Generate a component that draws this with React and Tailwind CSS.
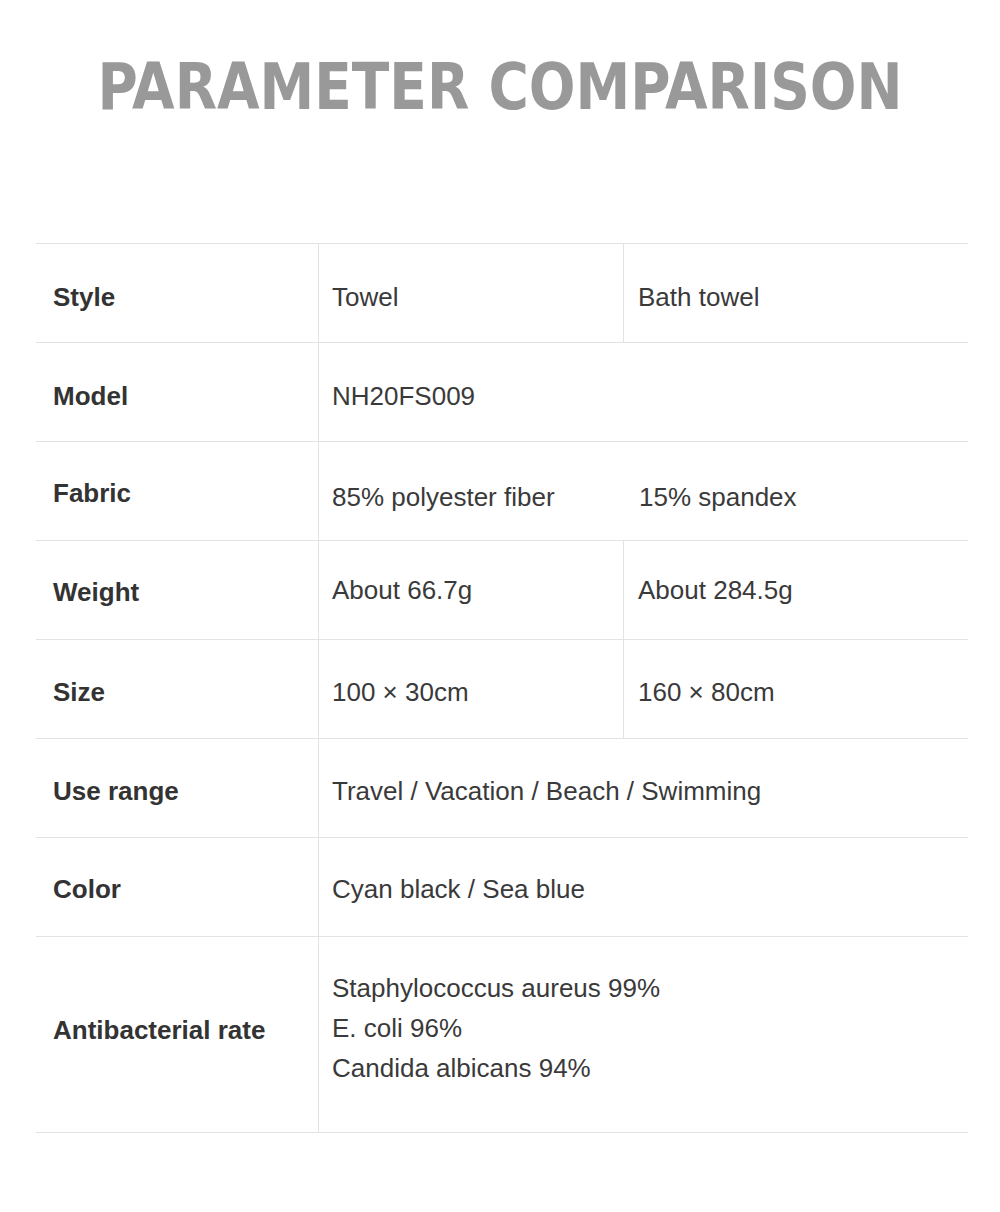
import React from 'react';

// 参数对比
const rows = [
  { label: 'Style', cells: ['Towel', 'Bath towel'], split: true, lp: 'pt-[8px]', vp: 'pt-[8px]' },
  { label: 'Model', cells: ['NH20FS009'], lp: 'pt-[8px]', vp: 'pt-[8px]' },
  { label: 'Fabric', cells: ['85% polyester fiber', '15% spandex'], split: false, lp: 'pt-[4px]', vp: 'pt-[12px]' },
  { label: 'Weight', cells: ['About 66.7g', 'About 284.5g'], split: true, lp: 'pt-[4px]', vp: '' },
  { label: 'Size', cells: ['100 × 30cm', '160 × 80cm'], split: true, lp: 'pt-[6px]', vp: 'pt-[6px]' },
  { label: 'Use range', cells: ['Travel / Vacation / Beach / Swimming'], lp: 'pt-[6px]', vp: 'pt-[6px]' },
  { label: 'Color', cells: ['Cyan black / Sea blue'], lp: 'pt-[4px]', vp: 'pt-[4px]' },
];

const Row = ({ row }) => {
  const two = row.cells.length === 2;
  return (
    <div className="grid grid-cols-[282px_306px_344px] h-[99px] border-b border-[#e3e3e3]">
      <div className={`flex items-center pl-[17px] font-bold text-[#333] ${row.lp}`}>{row.label}</div>
      {two ? (
        <>
          <div className={`flex items-center pl-[13px] border-l border-[#e3e3e3] ${row.split ? 'border-r' : ''} ${row.vp}`}>
            {row.cells[0]}
          </div>
          <div className={`flex items-center ${row.split ? 'pl-[14px]' : 'pl-[15px]'} ${row.vp}`}>
            {row.cells[1]}
          </div>
        </>
      ) : (
        <div className={`col-span-2 flex items-center pl-[13px] border-l border-[#e3e3e3] ${row.vp}`}>{row.cells[0]}</div>
      )}
    </div>
  );
};

export default function App() {
  return (
    <div className="w-[1000px] h-[1212px] bg-white text-[#3a3a3a] text-[26px]" style={{ fontFamily: '"Liberation Sans", Arial, sans-serif' }}>
      <div className="pt-[47px] h-[243px]">
        <h1
          className="text-center text-[#999] font-bold text-[64px] leading-[80px] tracking-normal scale-x-[0.955]"
          style={{ fontFamily: '"DejaVu Sans Condensed", "DejaVu Sans", sans-serif' }}
        >
          PARAMETER COMPARISON
        </h1>
      </div>
      <div className="w-[932px] ml-[36px] border-t border-[#e3e3e3]">
        {rows.map((r) => (
          <Row key={r.label} row={r} />
        ))}
        <div className="grid grid-cols-[282px_650px] h-[196px] border-b border-[#e3e3e3]">
          <div className="flex items-center pl-[17px] pb-[8px] font-bold text-[#333]">Antibacterial rate</div>
          <div className="flex flex-col justify-center pl-[13px] pb-[14px] border-l border-[#e3e3e3] leading-[40px]">
            <div>Staphylococcus aureus 99%</div>
            <div>E. coli 96%</div>
            <div>Candida albicans 94%</div>
          </div>
        </div>
      </div>
    </div>
  );
}
